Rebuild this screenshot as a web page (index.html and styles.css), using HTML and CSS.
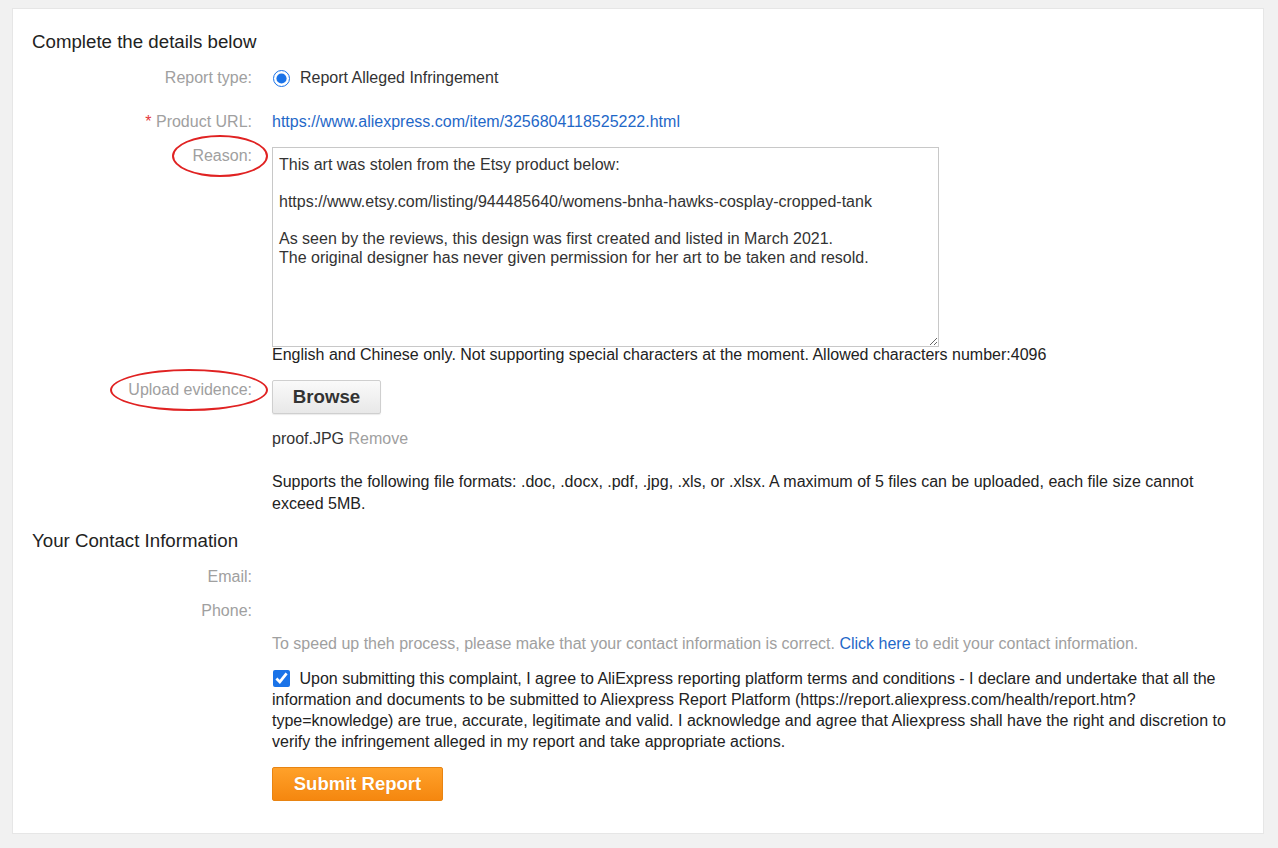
FILE: index.html
```html
<!DOCTYPE html>
<html lang="en">
<head>
<meta charset="utf-8">
<title>Report</title>
<link rel="stylesheet" href="styles.css">
</head>
<body>
<div class="panel">
  <h2 class="section-title">Complete the details below</h2>

  <div class="row row-type">
    <div class="label">Report type:</div>
    <div class="value"><label class="radio"><input type="radio" checked name="t"> Report Alleged Infringement</label></div>
  </div>

  <div class="row row-url">
    <div class="label"><span class="req">*</span> Product URL:</div>
    <div class="value"><a class="link" href="#">https://www.aliexpress.com/item/3256804118525222.html</a></div>
  </div>

  <div class="row row-reason">
    <div class="label label-top"><span class="circled">Reason:<span class="ring ring-reason"></span></span></div>
    <div class="value">
      <textarea class="reason" readonly>This art was stolen from the Etsy product below:

https://www.etsy.com/listing/944485640/womens-bnha-hawks-cosplay-cropped-tank

As seen by the reviews, this design was first created and listed in March 2021.
The original designer has never given permission for her art to be taken and resold.</textarea>
      <div class="hint">English and Chinese only. Not supporting special characters at the moment. Allowed characters number:4096</div>
    </div>
  </div>

  <div class="row row-upload">
    <div class="label label-upload"><span class="circled">Upload evidence:<span class="ring ring-upload"></span></span></div>
    <div class="value"><button class="btn-browse" type="button">Browse</button></div>
  </div>

  <div class="row row-file">
    <div class="label"></div>
    <div class="value">proof.JPG <span class="muted">Remove</span></div>
  </div>

  <div class="row row-formats">
    <div class="label"></div>
    <div class="value formats">Supports the following file formats: .doc, .docx, .pdf, .jpg, .xls, or .xlsx. A maximum of 5 files can be uploaded, each file size cannot exceed 5MB.</div>
  </div>

  <h2 class="section-title contact-title">Your Contact Information</h2>

  <div class="row row-email">
    <div class="label">Email:</div>
    <div class="value"></div>
  </div>

  <div class="row row-phone">
    <div class="label">Phone:</div>
    <div class="value"></div>
  </div>

  <div class="row row-speed">
    <div class="label"></div>
    <div class="value muted">To speed up theh process, please make that your contact information is correct. <a class="link" href="#">Click here</a> to edit your contact information.</div>
  </div>

  <div class="row row-agree">
    <div class="label"></div>
    <div class="value agree"><input type="checkbox" checked class="check"> Upon submitting this complaint, I agree to AliExpress reporting platform terms and conditions - I declare and undertake that all the information and documents to be submitted to Aliexpress Report Platform (https://report.aliexpress.com/health/report.htm?type=knowledge) are true, accurate, legitimate and valid. I acknowledge and agree that Aliexpress shall have the right and discretion to verify the infringement alleged in my report and take appropriate actions.</div>
  </div>

  <div class="row row-submit">
    <div class="label"></div>
    <div class="value"><button class="btn-submit" type="button">Submit Report</button></div>
  </div>
</div>
</body>
</html>
```
FILE: styles.css
```css
* { box-sizing: border-box; }
html, body { margin: 0; padding: 0; }
body {
  background: #f1f1f1;
  font-family: "Liberation Sans", Arial, sans-serif;
  font-size: 16px;
  color: #333;
  width: 1278px;
  height: 848px;
  overflow: hidden;
  padding-top: 8px;
}
.panel {
  margin-left: 12px;
  width: 1252px;
  height: 826px;
  background: #fff;
  border: 1px solid #e6e6e6;
  padding: 21px 19px 0 19px;
}
.section-title {
  margin: 0;
  font-size: 18.7px;
  font-weight: normal;
  line-height: 24px;
  color: #222;
}
.row {
  display: grid;
  grid-template-columns: 220px 1fr;
  column-gap: 20px;
  line-height: 20px;
}
.label {
  text-align: right;
  color: #a0a0a0;
}
.value { color: #333; }
.req { color: #e4393c; }
.link { color: #1f68c8; text-decoration: none; }
.muted { color: #a0a0a0; }
.muted .link { color: #1f68c8; }

.row-type { margin-top: 14px; }
.row-url { margin-top: 24px; }
.row-reason { margin-top: 15px; }
.row-upload { margin-top: 15px; }
.row-file { margin-top: 15px; }
.row-formats { margin-top: 22px; }
.contact-title { margin-top: 14px; }
.row-email { margin-top: 14px; }
.row-phone { margin-top: 14px; }
.row-speed { margin-top: 13px; }
.row-agree { margin-top: 14px; }
.row-submit { margin-top: 15px; }

.radio { display: flex; align-items: center; gap: 10px; height: 20px; }
.radio input { margin: 0 0 0 1px; width: 17px; height: 17px; accent-color: #1a73e8; }

.label-top { margin-top: -1px; }
.label-upload { padding-top: 0; }
.circled { position: relative; display: inline-block; }
.ring {
  position: absolute;
  border: 2px solid #e02222;
  border-radius: 50%;
  pointer-events: none;
}
.ring-reason { left: -20px; top: -11px; width: 96px; height: 42px; }
.ring-upload { left: -18px; top: -11px; width: 158px; height: 42px; }

.reason {
  display: block;
  width: 667px;
  height: 200px;
  border: 1px solid #c8c8c8;
  border-radius: 0;
  padding: 8px 6px 6px;
  font-family: "Liberation Sans", Arial, sans-serif;
  font-size: 16px;
  line-height: 18.5px;
  color: #333;
  resize: both;
  outline: none;
}
.hint { color: #222; margin-top: -2px; }

.btn-browse {
  display: block;
  width: 109px;
  height: 34px;
  border: 1px solid #cfcfcf;
  border-radius: 2px;
  background: linear-gradient(#fafafa, #e8e8e8);
  font-family: "Liberation Sans", Arial, sans-serif;
  font-size: 18.7px;
  font-weight: bold;
  color: #333;
  padding: 0;
  box-shadow: 0 1px 1px rgba(0,0,0,0.08);
}
.formats { line-height: 22px; color: #222; }
.agree { line-height: 21px; color: #222; }
.check {
  width: 17px;
  height: 17px;
  margin: 0 5px 0 1px;
  vertical-align: -3px;
  accent-color: #1a73e8;
}
.btn-submit {
  display: block;
  width: 171px;
  height: 34px;
  border: 1px solid #e88412;
  border-radius: 2px;
  background: linear-gradient(#ffa12a, #f5870f);
  color: #fff;
  font-family: "Liberation Sans", Arial, sans-serif;
  font-size: 18.5px;
  font-weight: bold;
  padding: 0;
  text-shadow: 0 0 1px rgba(180,90,0,0.4);
}
```
